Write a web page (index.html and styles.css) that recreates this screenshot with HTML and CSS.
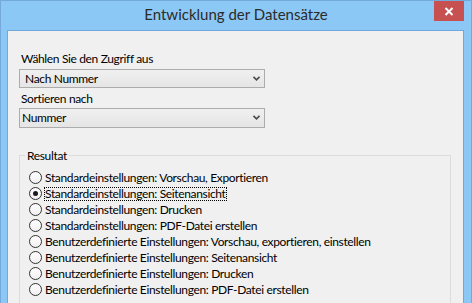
FILE: index.html
```html
<!DOCTYPE html>
<html lang="de">

<head>
    <meta charset="UTF-8">
    <meta name="viewport" content="width=device-width, initial-scale=1.0">
    <title>Entwicklung der Datensätze</title>
    <link rel="stylesheet" href="styles.css">
</head>

<body>

    <div class="window">
        <div class="titlebar">
            <span></span>
            <h1 class="title">Entwicklung der Datensätze</h1>
            <div class="close">
                <svg width="10" height="9" viewBox="0 0 10 9">
                    <path d="M1.5 1 L8.5 8 M8.5 1 L1.5 8" stroke="#ffffff" stroke-width="2" fill="none" />
                </svg>
            </div>
        </div>

        <div class="client">
            <!-- Zugriff -->
            <div class="field-label label-access">Wählen Sie den Zugriff aus</div>
            <div class="combo combo-access">
                <span class="combo-text">Nach Nummer</span>
                <svg class="chevron" width="7" height="5" viewBox="0 0 7 5">
                    <path d="M0.5 0.8 L3.5 3.8 L6.5 0.8" stroke="#4a4a4a" stroke-width="1.6" fill="none" />
                </svg>
            </div>

            <!-- Sortierung -->
            <div class="field-label label-sort">Sortieren nach</div>
            <div class="combo combo-sort">
                <span class="combo-text">Nummer</span>
                <svg class="chevron" width="7" height="5" viewBox="0 0 7 5">
                    <path d="M0.5 0.8 L3.5 3.8 L6.5 0.8" stroke="#4a4a4a" stroke-width="1.6" fill="none" />
                </svg>
            </div>

            <fieldset class="result">
                <legend>Resultat</legend>
                <div class="option"><span class="radio"></span><span class="option-text">Standardeinstellungen: Vorschau, Exportieren</span></div>
                <div class="option"><span class="radio checked"></span><span class="option-text focused">Standardeinstellungen: Seitenansicht</span></div>
                <div class="option"><span class="radio"></span><span class="option-text">Standardeinstellungen: Drucken</span></div>
                <div class="option"><span class="radio"></span><span class="option-text">Standardeinstellungen: PDF-Datei erstellen</span></div>
                <div class="option"><span class="radio"></span><span class="option-text">Benutzerdefinierte Einstellungen: Vorschau, exportieren, einstellen</span></div>
                <div class="option"><span class="radio"></span><span class="option-text">Benutzerdefinierte Einstellungen: Seitenansicht</span></div>
                <div class="option"><span class="radio"></span><span class="option-text">Benutzerdefinierte Einstellungen: Drucken</span></div>
                <div class="option"><span class="radio"></span><span class="option-text">Benutzerdefinierte Einstellungen: PDF-Datei erstellen</span></div>
            </fieldset>
        </div>
    </div>

</body>

</html>
```

FILE: styles.css
```css
* {
    margin: 0;
    padding: 0;
    box-sizing: border-box;
}

body {
    font-family: Lato, "Noto Sans", sans-serif;
    font-size: 12px;
    letter-spacing: -0.35px;
    color: #000000;
    background-color: #8cc8f6;
    overflow: hidden;
}

.window {
    width: 472px;
    height: 303px;
    background-color: #8cc8f6;
    border: 1px solid #74a9dc;
    border-bottom: none;
    overflow: hidden;
}

.titlebar {
    height: 29px;
    display: grid;
    grid-template-columns: 1fr auto 1fr;
    align-items: start;
}

.title {
    font-weight: normal;
    font-size: 15px;
    line-height: 20px;
    letter-spacing: 0;
    color: #2b2b2b;
    padding-top: 3px;
    white-space: nowrap;
}

.close {
    justify-self: end;
    width: 30px;
    height: 20px;
    margin-right: 7px;
    background-color: #c75050;
    display: flex;
    align-items: center;
    justify-content: center;
}

.client {
    margin-left: 6px;
    width: 457px;
    height: 300px;
    background-color: #f0f0f0;
    border: 1px solid #6ea8dc;
    border-bottom: none;
    padding: 0 11px;
    display: flex;
    flex-direction: column;
    align-items: flex-start;
}

.field-label {
    line-height: 15px;
    padding-left: 2px;
    white-space: nowrap;
}

.label-access {
    margin-top: 20px;
}

.label-sort {
    margin-top: 3px;
}

.combo {
    width: 246px;
    height: 21px;
    border: 1px solid #acacac;
    background: linear-gradient(#f0f0f0, #e5e5e5);
    display: flex;
    align-items: center;
    justify-content: space-between;
    padding-right: 4px;
}

.combo-access {
    margin-top: 3px;
    padding-left: 5px;
}

.combo-sort {
    margin-top: 2px;
    padding-left: 2px;
}

.combo-text {
    line-height: 15px;
    white-space: nowrap;
}

.result {
    margin-top: 20px;
    width: 432px;
    border: 1px solid #dcdcdc;
    padding: 7px 0 0 9px;
    height: 200px;
}

.result legend {
    margin-left: -4px;
    padding: 0 2px;
    line-height: 15px;
}

.option {
    height: 16px;
    display: flex;
    align-items: center;
    white-space: nowrap;
}

.radio {
    width: 13px;
    height: 13px;
    border: 1px solid #333333;
    border-radius: 50%;
    background: linear-gradient(#ffffff, #f0f0f0);
    margin-right: 3px;
    display: flex;
    align-items: center;
    justify-content: center;
}

.radio.checked::after {
    content: "";
    width: 5px;
    height: 5px;
    border-radius: 50%;
    background-color: #1a1a1a;
}

.option-text {
    line-height: 14px;
}

.option-text.focused {
    outline: 1px dotted #000000;
    outline-offset: -1px;
    padding: 0 1px;
    margin-left: -1px;
}
```
